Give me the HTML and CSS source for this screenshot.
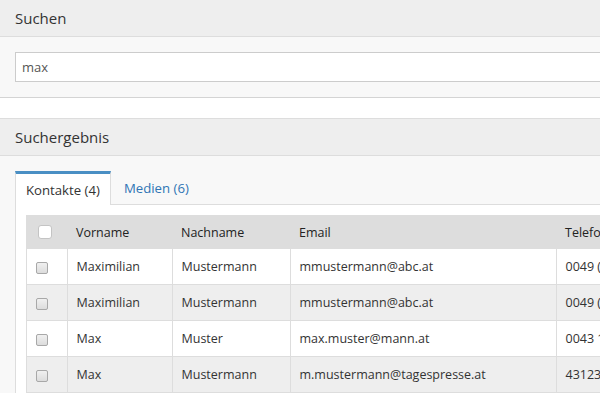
FILE: index.html
```html
<!DOCTYPE html>
<html lang="de">
<head>
  <meta charset="UTF-8">
  <title>Suche</title>
  <link rel="stylesheet" href="styles.css">
</head>
<body>
  <div class="page">
    <div class="panel">
      <div class="panel-head">Suchen</div>
      <div class="panel-body search-body">
        <input class="search-input" type="text" value="max">
      </div>
    </div>

    <div class="panel result">
      <div class="panel-head">Suchergebnis</div>
      <div class="panel-body">
        <div class="tabs">
          <div class="tab active">Kontakte (4)</div>
          <div class="tab">Medien (6)</div>
          <div class="tab-fill"></div>
        </div>
        <div class="tab-content">
          <table class="grid">
            <thead>
              <tr>
                <th class="check"><span class="box head-box"></span></th>
                <th class="c-first">Vorname</th>
                <th class="c-last">Nachname</th>
                <th class="c-mail">Email</th>
                <th class="c-phone">Telefon</th>
              </tr>
            </thead>
            <tbody>
              <tr>
                <td class="check"><span class="box"></span></td>
                <td>Maximilian</td>
                <td>Mustermann</td>
                <td>mmustermann@abc.at</td>
                <td>0049 (0) 123 456789</td>
              </tr>
              <tr>
                <td class="check"><span class="box"></span></td>
                <td>Maximilian</td>
                <td>Mustermann</td>
                <td>mmustermann@abc.at</td>
                <td>0049 (0) 123 456789</td>
              </tr>
              <tr>
                <td class="check"><span class="box"></span></td>
                <td>Max</td>
                <td>Muster</td>
                <td>max.muster@mann.at</td>
                <td>0043 1 234567</td>
              </tr>
              <tr>
                <td class="check"><span class="box"></span></td>
                <td>Max</td>
                <td>Mustermann</td>
                <td>m.mustermann@tagespresse.at</td>
                <td>431234567</td>
              </tr>
            </tbody>
          </table>
        </div>
      </div>
    </div>
  </div>
</body>
</html>
```

FILE: styles.css
```css
:root {
  --text: #333333;
  --line: #dddddd;
  --head: #eeeeee;
  --soft: #f8f8f8;
  --blue: #4a8fc4;
  --link: #2f75b5;
}
html, body {
  margin: 0;
  padding: 0;
  overflow: hidden;
  background: #ffffff;
}
body {
  font-family: "Open Sans", "Noto Sans", sans-serif;
  font-size: 12.5px;
  color: var(--text);
}
.page {
  width: 1000px;
}
.panel {
  border-bottom: 1px solid #d4d4d4;
}
.panel-head {
  height: 36px;
  line-height: 36px;
  padding: 0 15px;
  background: var(--head);
  border-bottom: 1px solid var(--line);
  font-size: 15px;
}
.panel-body {
  background: var(--soft);
  padding: 15px 0 0 15px;
}
.search-body {
  padding: 15px 0 15px 15px;
}
.search-input {
  display: block;
  box-sizing: border-box;
  width: 985px;
  height: 30px;
  margin: 0;
  padding: 0 6px;
  border: 1px solid #cccccc;
  background: #ffffff;
  font-family: inherit;
  font-size: 13px;
  color: #555555;
  outline: none;
}
.result {
  margin-top: 20px;
  border-top: 1px solid var(--line);
  border-bottom: none;
}
.tabs {
  display: flex;
  height: 34px;
  font-size: 13.2px;
}
.tab {
  padding: 0 14px 0 13px;
  line-height: 35px;
  color: var(--link);
  border-bottom: 1px solid var(--line);
}
.tab.active {
  padding: 0 10px 0 10px;
  background: #ffffff;
  color: var(--text);
  border-top: 3px solid var(--blue);
  border-left: 1px solid var(--line);
  border-right: 1px solid var(--line);
  border-bottom: none;
  line-height: 32px;
}
.tab-fill {
  flex: 1;
  border-bottom: 1px solid var(--line);
}
.tab-content {
  background: #ffffff;
  border-left: 1px solid var(--line);
  padding: 10px 0 0 10px;
}
.grid {
  border-collapse: collapse;
  border-left: 1px solid var(--line);
  table-layout: fixed;
  width: 960px;
}
.grid th {
  background: var(--line);
  height: 34px;
  text-align: left;
  font-weight: normal;
  padding: 0 9px;
  color: #222222;
}
.grid td {
  height: 35px;
  padding: 0 9px;
  border-right: 1px solid var(--line);
  border-bottom: 1px solid var(--line);
  white-space: nowrap;
}
.grid tbody tr:nth-child(even) td {
  background: var(--head);
}
.grid .check {
  width: 22px;
}
.c-first { width: 87px; }
.c-last { width: 100px; }
.c-mail { width: 248px; }
.box {
  display: block;
  box-sizing: border-box;
  width: 12px;
  height: 12px;
  border: 1px solid #a8a8a8;
  border-radius: 2px;
  background: linear-gradient(#f0f0f0, #dcdcdc);
  margin-top: 2px;
}
.head-box {
  width: 14px;
  height: 14px;
  margin: 0 0 0 2px;
  border-color: #c4c4c4;
  border-radius: 3px;
  background: #ffffff;
}
```
